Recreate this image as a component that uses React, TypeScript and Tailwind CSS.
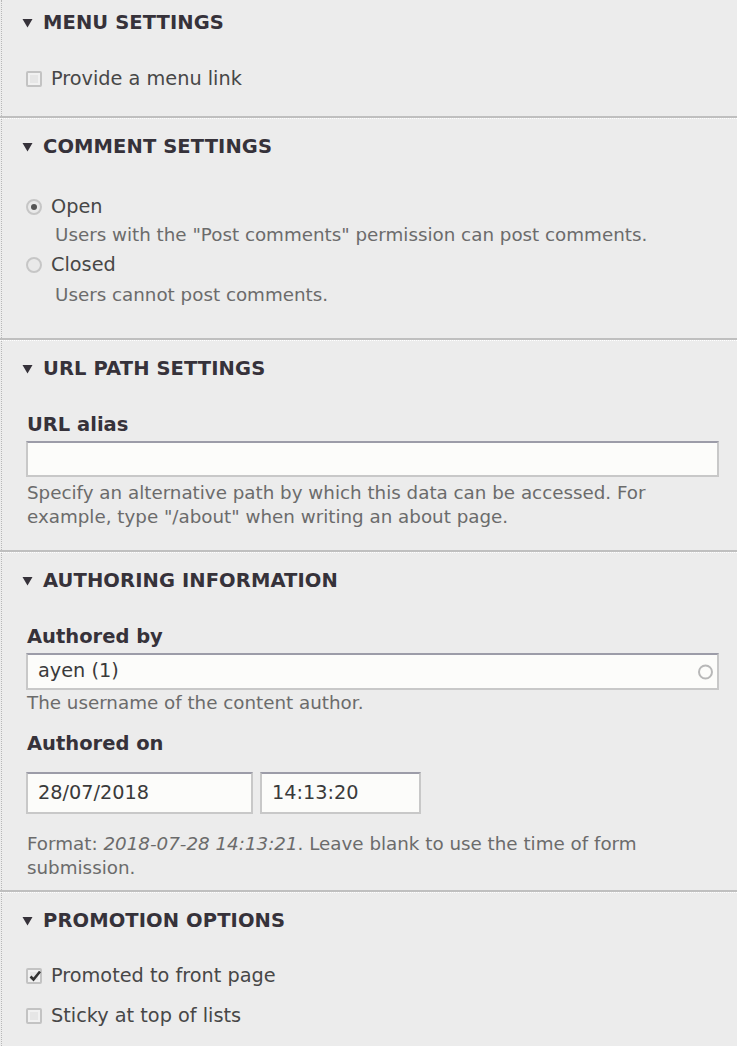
import React from "react";

const Tri = () => (
  <svg width="11" height="10" viewBox="0 0 11 10" className="shrink-0">
    <path d="M0.5 1 L10.5 1 L5.5 9.5 Z" fill="#36323a" />
  </svg>
);

function Heading({ title }: { title: string }) {
  return (
    <div className="flex items-center h-[24px] pl-[20px]">
      <Tri />
      <span className="ml-[10px] text-[19.5px] leading-[24px] font-bold uppercase text-[#36323a] tracking-[0.1px]">
        {title}
      </span>
    </div>
  );
}

function Checkbox({ checked = false, label, className = "" }: { checked?: boolean; label: string; className?: string }) {
  return (
    <div className={`flex items-center h-[24px] ${className}`}>
      <span className="relative w-[16px] h-[16px] shrink-0 rounded-[2px] border-2 border-[#c3c3c3] bg-[#f1f1f1]">
        <span className="absolute inset-[2px] bg-[#e6e6e6]" />
        {checked && (
          <svg width="16" height="16" viewBox="0 0 16 16" className="absolute -left-[1px] -top-[2px]">
            <path d="M3.5 8.5 L6.5 11.5 L13 3.5" stroke="#333" strokeWidth="2.6" fill="none" />
          </svg>
        )}
      </span>
      <span className="ml-[9px] text-[19.3px] leading-[24px] text-[#474747]">{label}</span>
    </div>
  );
}

function Radio({ checked = false, label, className = "" }: { checked?: boolean; label: string; className?: string }) {
  return (
    <div className={`flex items-center h-[24px] ${className}`}>
      <span className="flex items-center justify-center w-[16px] h-[16px] shrink-0 rounded-full border-2 border-[#c6c6c6] bg-[#e9e9e9]">
        {checked && <span className="w-[6px] h-[6px] rounded-full bg-[#555]" />}
      </span>
      <span className="ml-[9px] text-[19.3px] leading-[24px] text-[#474747]">{label}</span>
    </div>
  );
}

const desc = "text-[18.3px] leading-[24px] text-[#6b6b6b]";
const label = "text-[19.5px] leading-[24px] font-bold text-[#36323a]";
const inputBox =
  "border-2 border-[#c8c8c8] border-t-[#9c9ca8] bg-[#fcfcfa] flex items-center pl-[10px] text-[19.3px] text-[#3a3a3a]";

function Section({
  children,
  first = false,
  last = false,
  pt,
  pb,
}: {
  children: React.ReactNode;
  first?: boolean;
  last?: boolean;
  pt: string;
  pb: string;
}) {
  return (
    <section className={last ? "" : "border-b-2 border-solid border-[#bfbfbf]"}>
      <div className={first ? "" : "border-t border-dotted border-white"}>
        <div className={`ml-px border-l border-dotted border-[#b8b8b8] ${pt} ${pb}`}>{children}</div>
      </div>
    </section>
  );
}

export default function App() {
  return (
    <div className="w-[737px] h-[1046px] overflow-hidden bg-[#ececec] font-['DejaVu_Sans',sans-serif]">
      <Section first pt="pt-[11px]" pb="pb-[25px]">
        <Heading title="Menu settings" />
        <div className="pl-[24px] pr-[18px] mt-[32px]">
          <Checkbox label="Provide a menu link" />
        </div>
      </Section>

      <Section pt="pt-[16px]" pb="pb-[31px]">
        <Heading title="Comment settings" />
        <div className="pl-[24px] pr-[18px] mt-[36px]">
          <Radio checked label="Open" />
          <div className={`${desc} mt-[4px] ml-[29px]`}>
            Users with the "Post comments" permission can post comments.
          </div>
          <Radio label="Closed" className="mt-[6px]" />
          <div className={`${desc} mt-[6px] ml-[29px]`}>Users cannot post comments.</div>
        </div>
      </Section>

      <Section pt="pt-[16px]" pb="pb-[21px]">
        <Heading title="URL path settings" />
        <div className="pl-[24px] pr-[18px] mt-[32px]">
          <div className={`${label} pl-[1px]`}>URL alias</div>
          <div className={`${inputBox} mt-[4px] h-[36px]`} />
          <div className={`${desc} mt-[4px] pl-[1px]`}>
            Specify an alternative path by which this data can be accessed. For example, type "/about" when
            writing an about page.
          </div>
        </div>
      </Section>

      <Section pt="pt-[16px]" pb="pb-[10px]">
        <Heading title="Authoring information" />
        <div className="pl-[24px] pr-[18px] mt-[32px]">
          <div className={`${label} pl-[1px]`}>Authored by</div>
          <div className={`${inputBox} relative mt-[4px] h-[37px]`}>
            <span>ayen (1)</span>
            <span className="absolute right-[4px] top-1/2 -translate-y-1/2 w-[15px] h-[15px] rounded-full border-2 border-[#b8b8b8]" />
          </div>
          <div className={`${desc} mt-[1px] pl-[1px]`}>The username of the content author.</div>
          <div className={`${label} mt-[17px] pl-[1px]`}>Authored on</div>
          <div className="flex gap-[7px] mt-[16px]">
            <div className={`${inputBox} w-[227px] h-[42px]`}>28/07/2018</div>
            <div className={`${inputBox} w-[161px] h-[42px]`}>14:13:20</div>
          </div>
          <div className={`${desc} mt-[18px] pl-[1px]`}>
            Format: <em>2018-07-28 14:13:21</em>. Leave blank to use the time of form submission.
          </div>
        </div>
      </Section>

      <Section last pt="pt-[16px]" pb="pb-[20px]">
        <Heading title="Promotion options" />
        <div className="pl-[24px] pr-[18px] mt-[31px]">
          <Checkbox checked label="Promoted to front page" />
          <Checkbox label="Sticky at top of lists" className="mt-[16px]" />
        </div>
      </Section>
    </div>
  );
}
